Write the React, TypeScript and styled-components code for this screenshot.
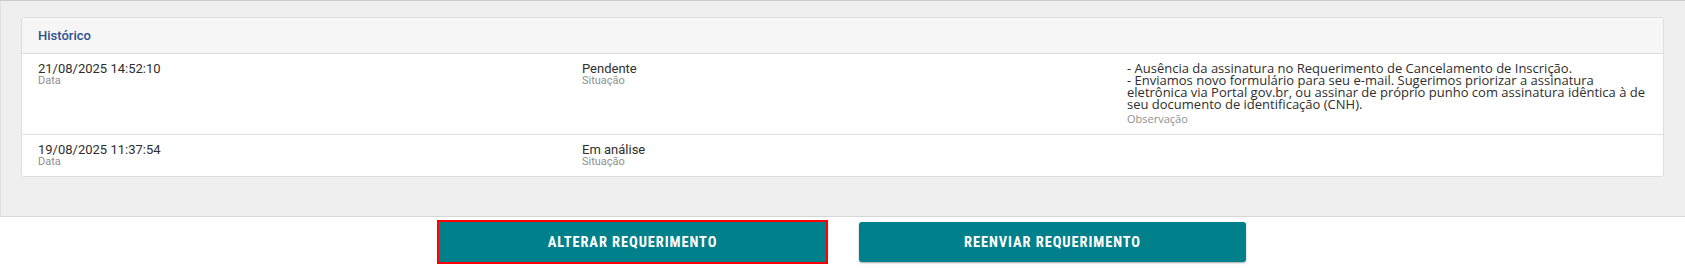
import React from "react";
import styled, { createGlobalStyle } from "styled-components";

const Global = createGlobalStyle`
  html, body { margin: 0; padding: 0; background: #ffffff; }
  body { font-family: Roboto, "Noto Sans", Arial, sans-serif; }
`;

const Page = styled.div`
  width: 1685px;
  display: flex;
  flex-direction: column;
`;

const GraySection = styled.section`
  background: #efefef;
  border-top: 1px solid #c9c9c9;
  border-bottom: 1px solid #d6d6d6;
  border-left: 1px solid #e2e2e2;
  padding: 16px 21px 39px 20px;
`;

const Card = styled.div`
  background: #ffffff;
  border: 1px solid #dedede;
  border-radius: 3px;
  overflow: hidden;
`;

const CardHeader = styled.div`
  background: #f6f6f6;
  border-bottom: 1px solid #dcdcdc;
  height: 35px;
  display: flex;
  align-items: center;
  padding: 0 16px;
  font-family: Roboto, sans-serif;
  font-weight: 500;
  font-size: 13px;
  color: #2d4f8f;
`;

const Row = styled.div<{ $last?: boolean }>`
  display: grid;
  grid-template-columns: 544px 545px 1fr;
  padding: ${(p) => (p.$last ? "8px 16px 9px" : "8px 16px 8px")};
  border-bottom: ${(p) => (p.$last ? "none" : "1px solid #e0e0e0")};
  height: ${(p) => (p.$last ? "41px" : "81px")};
  box-sizing: border-box;
`;

const Field = styled.div`
  display: flex;
  flex-direction: column;
`;

const Value = styled.div`
  font-family: Roboto, sans-serif;
  font-size: 13px;
  line-height: 13px;
  color: #2e2e2e;
`;

const Label = styled.div`
  font-family: Roboto, sans-serif;
  font-size: 11px;
  line-height: 11px;
  color: #8f8f8f;
`;

const ObsText = styled.div`
  font-family: "Open Sans", sans-serif;
  font-size: 13px;
  line-height: 12px;
  color: #2e2e2e;
  white-space: pre-line;
`;

const ObsLabel = styled.div`
  font-family: "Open Sans", sans-serif;
  font-size: 11px;
  line-height: 13px;
  margin-top: 2px;
  color: #8f8f8f;
`;

const Actions = styled.div`
  display: flex;
  justify-content: center;
  gap: 33px;
  padding: 5px 0 6px;
`;

const ActionButton = styled.button<{ $focused?: boolean }>`
  width: 387px;
  height: 40px;
  border: none;
  border-radius: ${(p) => (p.$focused ? "0" : "3px")};
  background: #00808a;
  color: #ffffff;
  font-family: "Liberation Sans Narrow", "Roboto Condensed", "DejaVu Sans Condensed", sans-serif;
  font-weight: 700;
  font-size: 14.5px;
  letter-spacing: 0.9px;
  cursor: pointer;
  box-shadow: ${(p) => (p.$focused ? "none" : "0 1px 2px rgba(0,0,0,0.35)")};
  outline: ${(p) => (p.$focused ? "2px solid #ff0000" : "none")};
  outline-offset: 0;
`;

const history = [
  {
    date: "21/08/2025 14:52:10",
    status: "Pendente",
    obs:
      "- Ausência da assinatura no Requerimento de Cancelamento de Inscrição.\n- Enviamos novo formulário para seu e-mail. Sugerimos priorizar a assinatura eletrônica via Portal gov.br, ou assinar de próprio punho com assinatura idêntica à de seu documento de identificação (CNH).",
  },
  { date: "19/08/2025 11:37:54", status: "Em análise", obs: "" },
];

export default function App() {
  return (
    <Page>
      <Global />
      <GraySection>
        <Card>
          <CardHeader>Histórico</CardHeader>
          {history.map((h, i) => (
            <Row key={h.date} $last={i === history.length - 1}>
              <Field>
                <Value>{h.date}</Value>
                <Label>Data</Label>
              </Field>
              <Field>
                <Value>{h.status}</Value>
                <Label>Situação</Label>
              </Field>
              {h.obs ? (
                <Field>
                  <ObsText>{h.obs}</ObsText>
                  <ObsLabel>Observação</ObsLabel>
                </Field>
              ) : (
                <div />
              )}
            </Row>
          ))}
        </Card>
      </GraySection>
      <Actions>
        <ActionButton $focused>ALTERAR REQUERIMENTO</ActionButton>
        <ActionButton>REENVIAR REQUERIMENTO</ActionButton>
      </Actions>
    </Page>
  );
}
